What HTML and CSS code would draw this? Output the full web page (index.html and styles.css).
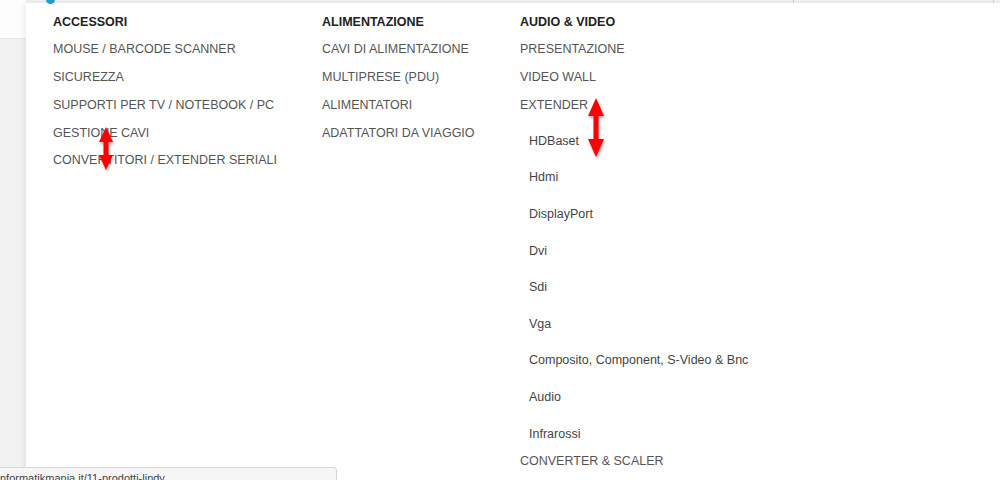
FILE: index.html
```html
<!DOCTYPE html>
<html lang="it">
<head>
<meta charset="utf-8">
<title>Menu</title>
<link rel="stylesheet" href="styles.css">
</head>
<body>
<div class="page">
  <header class="header">
    <div class="header-left"></div>
    <div class="header-bar">
      <span class="sep sep-a"></span>
      <span class="sep sep-b"></span>
    </div>
  </header>
  <div class="content"></div>

  <span class="dot"></span>

  <nav class="menu">
    <div class="col col-1">
      <div class="heading">ACCESSORI</div>
      <ul class="items">
        <li>MOUSE / BARCODE SCANNER</li>
        <li>SICUREZZA</li>
        <li>SUPPORTI PER TV / NOTEBOOK / PC</li>
        <li>GESTIONE CAVI</li>
        <li>CONVERTITORI / EXTENDER SERIALI</li>
      </ul>
    </div>
    <div class="col col-2">
      <div class="heading">ALIMENTAZIONE</div>
      <ul class="items">
        <li>CAVI DI ALIMENTAZIONE</li>
        <li>MULTIPRESE (PDU)</li>
        <li>ALIMENTATORI</li>
        <li>ADATTATORI DA VIAGGIO</li>
      </ul>
    </div>
    <div class="col col-3">
      <div class="heading">AUDIO &amp; VIDEO</div>
      <ul class="items">
        <li>PRESENTAZIONE</li>
        <li>VIDEO WALL</li>
        <li>EXTENDER
          <ul class="sub">
            <li>HDBaset</li>
            <li>Hdmi</li>
            <li>DisplayPort</li>
            <li>Dvi</li>
            <li>Sdi</li>
            <li>Vga</li>
            <li>Composito, Component, S-Video &amp; Bnc</li>
            <li>Audio</li>
            <li>Infrarossi</li>
          </ul>
        </li>
        <li>CONVERTER &amp; SCALER</li>
      </ul>
    </div>
  </nav>

  <svg class="arrow arrow-1" width="16" height="47" viewBox="0 0 16 47">
    <polygon points="7,0 14,15 9.5,15 9.5,28 14,28 7,43 0,28 4.5,28 4.5,15 0,15"/>
  </svg>
  <svg class="arrow arrow-2" width="18" height="63" viewBox="0 0 18 63">
    <polygon points="8,0 16,18 10.5,18 10.5,41 16,41 8,59 0,41 5.5,41 5.5,18 0,18"/>
  </svg>

  <div class="status">nformatikmania.it/11-prodotti-lindy</div>
</div>
</body>
</html>
```

FILE: styles.css
```css
* { box-sizing: border-box; }

html, body {
  margin: 0;
  padding: 0;
}

body {
  width: 1000px;
  height: 480px;
  overflow: hidden;
  font-family: "Liberation Sans", Arial, sans-serif;
  background: #f2f2f2;
}

.page {
  position: relative;
  width: 1000px;
  height: 480px;
  display: flex;
  flex-direction: column;
}

.header {
  height: 39px;
  display: flex;
  background: #fdfdfd;
  border-bottom: 1px solid #e6e6e6;
}

.header-left {
  width: 26px;
}

.header-bar {
  flex: 1;
  position: relative;
  background: #f0f0f0;
  height: 10px;
}

.sep {
  position: absolute;
  top: 0;
  width: 1px;
  height: 10px;
  background: #cfcfcf;
}
.sep-a { left: 767px; }
.sep-b { left: 967px; background: #e8c8c8; }

.content {
  flex: 1;
  background: #f2f2f2;
}

.dot {
  position: absolute;
  left: 46px;
  top: -5px;
  width: 9px;
  height: 9px;
  border-radius: 50%;
  background: #1c9ad6;
  z-index: 3;
}

.menu {
  position: absolute;
  left: 26px;
  top: 3px;
  right: 0;
  bottom: 0;
  background: #ffffff;
  box-shadow: -2px 0 5px rgba(0, 0, 0, 0.07);
  display: flex;
  padding: 5.5px 0 0 27px;
  z-index: 2;
}

.col-1 { width: 269px; }
.col-2 { width: 198px; }
.col-3 { flex: 1; }

.heading {
  font-size: 12.5px;
  font-weight: bold;
  color: #222222;
  line-height: 27.75px;
}

.items,
.sub {
  list-style: none;
  margin: 0;
  padding: 0;
}

.items > li {
  font-size: 12.5px;
  color: #555555;
  line-height: 27.75px;
  white-space: nowrap;
}

.sub {
  padding: 3.4px 0 0 9px;
  margin-bottom: -4.1px;
}

.sub > li {
  font-size: 12.5px;
  color: #444444;
  line-height: 36.6px;
}

.arrow {
  position: absolute;
  z-index: 4;
  fill: #ff0000;
  filter: drop-shadow(1px 2px 1.5px rgba(0, 0, 0, 0.35));
}

.arrow-1 {
  left: 99px;
  top: 127px;
}

.arrow-2 {
  left: 588px;
  top: 98px;
}

.status {
  position: absolute;
  left: 0;
  top: 467px;
  width: 337px;
  height: 20px;
  background: #f6f6f6;
  border-top: 1px solid #d6d6d6;
  border-right: 1px solid #d6d6d6;
  border-top-right-radius: 4px;
  font-family: "Liberation Sans", Arial, sans-serif;
  font-size: 11px;
  color: #444444;
  padding: 3px 0 0 0;
  line-height: 14px;
  white-space: nowrap;
  overflow: hidden;
  z-index: 5;
}
```
